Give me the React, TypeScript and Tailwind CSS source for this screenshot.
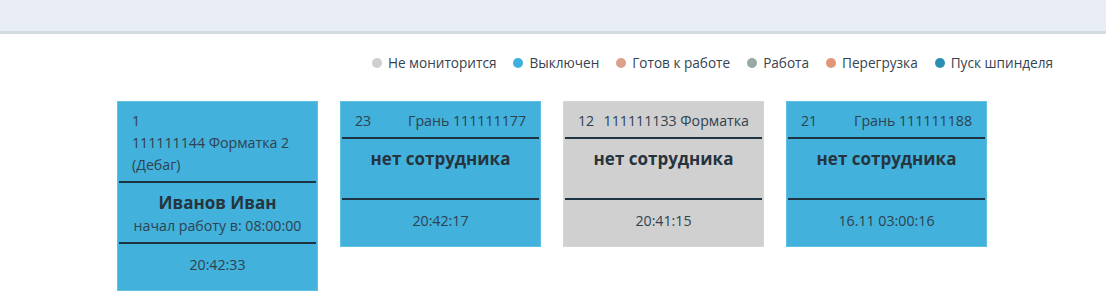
import React from "react";

const legend = [
  { c: "bg-[#cfcfcf]", t: "Не мониторится" },
  { c: "bg-[#3eb0dd]", t: "Выключен" },
  { c: "bg-[#dca18a]", t: "Готов к работе" },
  { c: "bg-[#98a9a3]", t: "Работа" },
  { c: "bg-[#e2967a]", t: "Перегрузка" },
  { c: "bg-[#2b8fb3]", t: "Пуск шпинделя" },
];

type Card = {
  num: string;
  name: string;
  worker: string;
  sub?: string;
  time: string;
  gray?: boolean;
};

const cards: Card[] = [
  { num: "1", name: "111111144 Форматка 2 (Дебаг)", worker: "Иванов Иван", sub: "начал работу в: 08:00:00", time: "20:42:33" },
  { num: "23", name: "Грань 111111177", worker: "нет сотрудника", time: "20:42:17" },
  { num: "12", name: "111111133 Форматка", worker: "нет сотрудника", time: "20:41:15", gray: true },
  { num: "21", name: "Грань 111111188", worker: "нет сотрудника", time: "16.11 03:00:16" },
];

function MachineCard({ c }: { c: Card }) {
  return (
    <div
      className={
        "w-[201px] border " +
        (c.gray ? "bg-[#d0d0d0] border-[#d6d6d6]" : "bg-[#42b1dc] border-[#62bfe4]")
      }
    >
      <div className="flex flex-wrap justify-between px-[14px] pt-[8px] pb-[5px] text-[14.2px] leading-[22px] text-[#2f4250]">
        <span>{c.num}</span>
        <span>{c.name}</span>
      </div>
      <div className="mx-[1px] h-[2px] bg-[#1e3442]" />
      <div className="flex flex-col items-center pt-[7px] pb-[5px] text-[#26343d]">
        <div className="text-[17px] font-bold leading-[25px]">{c.worker}</div>
        <div className="text-[14.2px] leading-[22px] h-[22px] text-[#2f4250]">{c.sub ?? ""}</div>
      </div>
      <div className="mx-[1px] h-[2px] bg-[#1e3442]" />
      <div className="pt-[10px] pb-[14px] text-center text-[14.2px] leading-[22px] text-[#2f4250]">
        {c.time}
      </div>
    </div>
  );
}

export default function App() {
  return (
    <div
      className="w-[1106px] h-[308px] bg-white overflow-hidden"
      style={{ fontFamily: '"Open Sans", "Noto Sans", sans-serif' }}
    >
      <div className="h-[34px] bg-[#e9eef6] border-b-[3px] border-[#d3dbde]" />
      <div className="flex justify-end items-center gap-[17px] pr-[53px] pt-[15px] h-[57px] pb-[14px] text-[13.6px] text-[#34444f]">
        {legend.map((l) => (
          <div key={l.t} className="flex items-center gap-[6px]">
            <span className={"inline-block w-[10px] h-[10px] rounded-full " + l.c} />
            <span>{l.t}</span>
          </div>
        ))}
      </div>
      <div className="flex items-start gap-[22px] pl-[117px] pt-[10px]">
        {cards.map((c) => (
          <MachineCard key={c.num} c={c} />
        ))}
      </div>
    </div>
  );
}
